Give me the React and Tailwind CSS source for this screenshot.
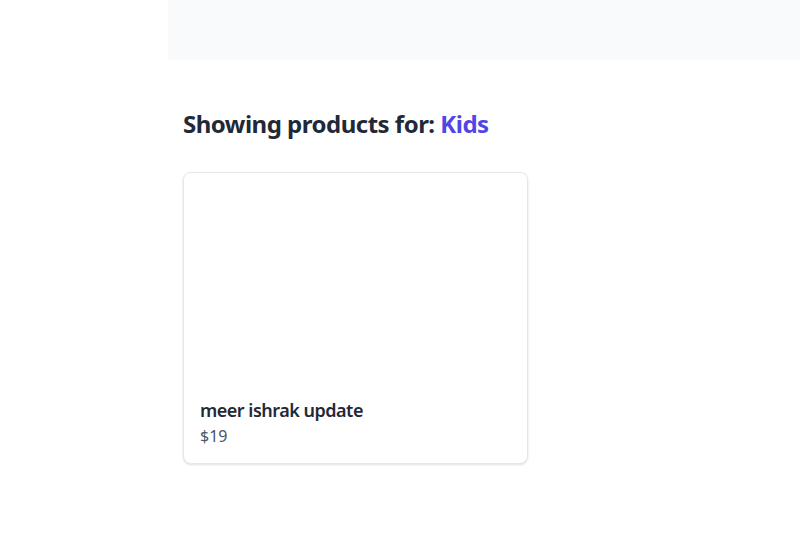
import React from "react";

const products = [{ id: 1, name: "meer ishrak update", price: 19 }];

const ProductCard = ({ product }) => (
  <div className="w-[345px] bg-white border border-[#e5e7eb] rounded-lg shadow-sm overflow-hidden">
    <div className="h-[207px] w-full bg-white" />
    <div className="px-4 pt-4 pb-[15px]">
      <h3 className="text-lg font-semibold text-[#1f2937] leading-7 tracking-[-0.5px]">
        {product.name}
      </h3>
      <p className="text-base text-[#4b5563] leading-6">${product.price}</p>
    </div>
  </div>
);

const App = () => {
  return (
    <div
      className="min-h-screen bg-white flex"
      style={{ fontFamily: '"Noto Sans", "Open Sans", sans-serif' }}
    >
      <aside className="w-[168px] shrink-0 bg-white" />
      <div className="flex-1 flex flex-col">
        <header className="h-[60px] bg-[#f9fafb]" />
        <main className="px-[15px] pt-[48px]">
          <h1 className="text-2xl font-bold text-[#1f2937] mb-[32px] tracking-[-0.5px]">
            Showing products for: <span className="text-[#4f46e5]">Kids</span>
          </h1>
          <div className="flex flex-wrap gap-6">
            {products.map((p) => (
              <ProductCard key={p.id} product={p} />
            ))}
          </div>
        </main>
      </div>
    </div>
  );
};

export default App;
